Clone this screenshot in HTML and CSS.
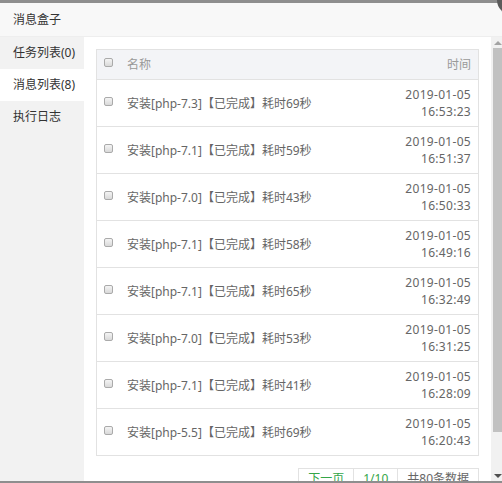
FILE: index.html
```html
<!DOCTYPE html>
<html lang="zh-CN">
<head>
<meta charset="utf-8">
<title>消息盒子</title>
<link rel="stylesheet" href="styles.css">
</head>
<body>
<div class="layer">
  <div class="layer-title">消息盒子</div>
  <span class="layer-close"></span>
  <div class="layer-body">
    <ul class="nav">
      <li class="nav-item">任务列表(0)</li>
      <li class="nav-item active">消息列表(8)</li>
      <li class="nav-item">执行日志</li>
    </ul>
    <div class="content">
      <div class="table">
        <div class="row head">
          <div class="c-chk"><span class="chk"></span></div>
          <div class="c-name">名称</div>
          <div class="c-time">时间</div>
        </div>
        <div class="row">
          <div class="c-chk"><span class="chk"></span></div>
          <div class="c-name">安装[php-7.3]【已完成】耗时69秒</div>
          <div class="c-time">2019-01-05<br>16:53:23</div>
        </div>
        <div class="row">
          <div class="c-chk"><span class="chk"></span></div>
          <div class="c-name">安装[php-7.1]【已完成】耗时59秒</div>
          <div class="c-time">2019-01-05<br>16:51:37</div>
        </div>
        <div class="row">
          <div class="c-chk"><span class="chk"></span></div>
          <div class="c-name">安装[php-7.0]【已完成】耗时43秒</div>
          <div class="c-time">2019-01-05<br>16:50:33</div>
        </div>
        <div class="row">
          <div class="c-chk"><span class="chk"></span></div>
          <div class="c-name">安装[php-7.1]【已完成】耗时58秒</div>
          <div class="c-time">2019-01-05<br>16:49:16</div>
        </div>
        <div class="row">
          <div class="c-chk"><span class="chk"></span></div>
          <div class="c-name">安装[php-7.1]【已完成】耗时65秒</div>
          <div class="c-time">2019-01-05<br>16:32:49</div>
        </div>
        <div class="row">
          <div class="c-chk"><span class="chk"></span></div>
          <div class="c-name">安装[php-7.0]【已完成】耗时53秒</div>
          <div class="c-time">2019-01-05<br>16:31:25</div>
        </div>
        <div class="row">
          <div class="c-chk"><span class="chk"></span></div>
          <div class="c-name">安装[php-7.1]【已完成】耗时41秒</div>
          <div class="c-time">2019-01-05<br>16:28:09</div>
        </div>
        <div class="row">
          <div class="c-chk"><span class="chk"></span></div>
          <div class="c-name">安装[php-5.5]【已完成】耗时69秒</div>
          <div class="c-time">2019-01-05<br>16:20:43</div>
        </div>
      </div>
      <div class="pager">
        <span class="pg link">下一页</span>
        <span class="pg link">1/10</span>
        <span class="pg">共80条数据</span>
      </div>
    </div>
    <div class="scrollbar">
      <div class="sb-btn"><span class="arr-up"></span></div>
      <div class="sb-thumb"></div>
      <div class="sb-track"></div>
      <div class="sb-btn"><span class="arr-down"></span></div>
    </div>
  </div>
</div>
</body>
</html>
```

FILE: styles.css
```css
html, body {
  margin: 0;
  padding: 0;
}
body {
  background: #8e8e8e;
  width: 502px;
  height: 483px;
  overflow: hidden;
  font-family: "Noto Sans", "Noto Sans CJK SC", sans-serif;
  font-size: 12px;
  color: #333;
}
.layer {
  position: relative;
  margin-top: 3px;
  height: 478px;
  background: #fff;
  display: flex;
  flex-direction: column;
  overflow: visible;
}
.layer-title {
  height: 33px;
  line-height: 33px;
  padding-left: 13px;
  background: #f8f8f8;
  border-bottom: 1px solid #eee;
  color: #333;
  flex: none;
}
.layer-close {
  position: absolute;
  left: 497px;
  top: -18px;
  width: 30px;
  height: 30px;
  border-radius: 50%;
  background: #5b5b5b;
}
.layer-body {
  flex: 1;
  display: flex;
  min-height: 0;
  overflow: hidden;
}
.nav {
  list-style: none;
  margin: 0;
  padding: 0;
  width: 84px;
  flex: none;
  background: #f2f2f2;
}
.nav-item {
  height: 32px;
  line-height: 32px;
  padding-left: 13px;
  color: #333;
}
.nav-item.active {
  background: #fff;
}
.content {
  flex: 1;
  padding: 12px 12px 0 12px;
  min-width: 0;
}
.table {
  border: 1px solid #e2e2e2;
  color: #666;
}
.row {
  display: flex;
  align-items: center;
  height: 46px;
  border-top: 1px solid #e2e2e2;
}
.row.head {
  height: 29px;
  border-top: none;
  background: #f3f4f7;
  color: #999;
}
.c-chk {
  width: 30px;
  padding-left: 7px;
  box-sizing: border-box;
  flex: none;
  display: flex;
  align-items: center;
}
.chk {
  display: block;
  width: 7px;
  height: 7px;
  border: 1px solid #aaa;
  border-radius: 2px;
  background: linear-gradient(#f4f4f4, #d9d9d9);
  margin-top: -4px;
}
.c-name {
  flex: 1;
  line-height: 17px;
  white-space: nowrap;
}
.c-time {
  padding-right: 7px;
  text-align: right;
  line-height: 17px;
  letter-spacing: 0.3px;
}
.row.head .c-time {
  letter-spacing: 0;
}
.pager {
  display: flex;
  justify-content: flex-end;
  margin-top: 12px;
}
.pg {
  display: block;
  height: 26px;
  line-height: 20px;
  padding: 0 9px;
  border: 1px solid #e2e2e2;
  color: #666;
}
.pg + .pg {
  border-left: none;
}
.pg.link {
  color: #35a648;
}
.scrollbar {
  width: 11px;
  flex: none;
  background: #f1f1f1;
  display: flex;
  flex-direction: column;
}
.sb-btn {
  height: 11px;
  flex: none;
  display: flex;
  justify-content: center;
  align-items: center;
  padding-left: 2px;
}
.arr-up, .arr-down {
  width: 0;
  height: 0;
  border-left: 4px solid transparent;
  border-right: 4px solid transparent;
}
.arr-up {
  border-bottom: 4px solid #a3a3a3;
}
.arr-down {
  border-top: 4px solid #505050;
}
.sb-thumb {
  height: 384px;
  margin-left: 2px;
  background: #c1c1c1;
  flex: none;
}
.sb-track {
  flex: 1;
}
```
